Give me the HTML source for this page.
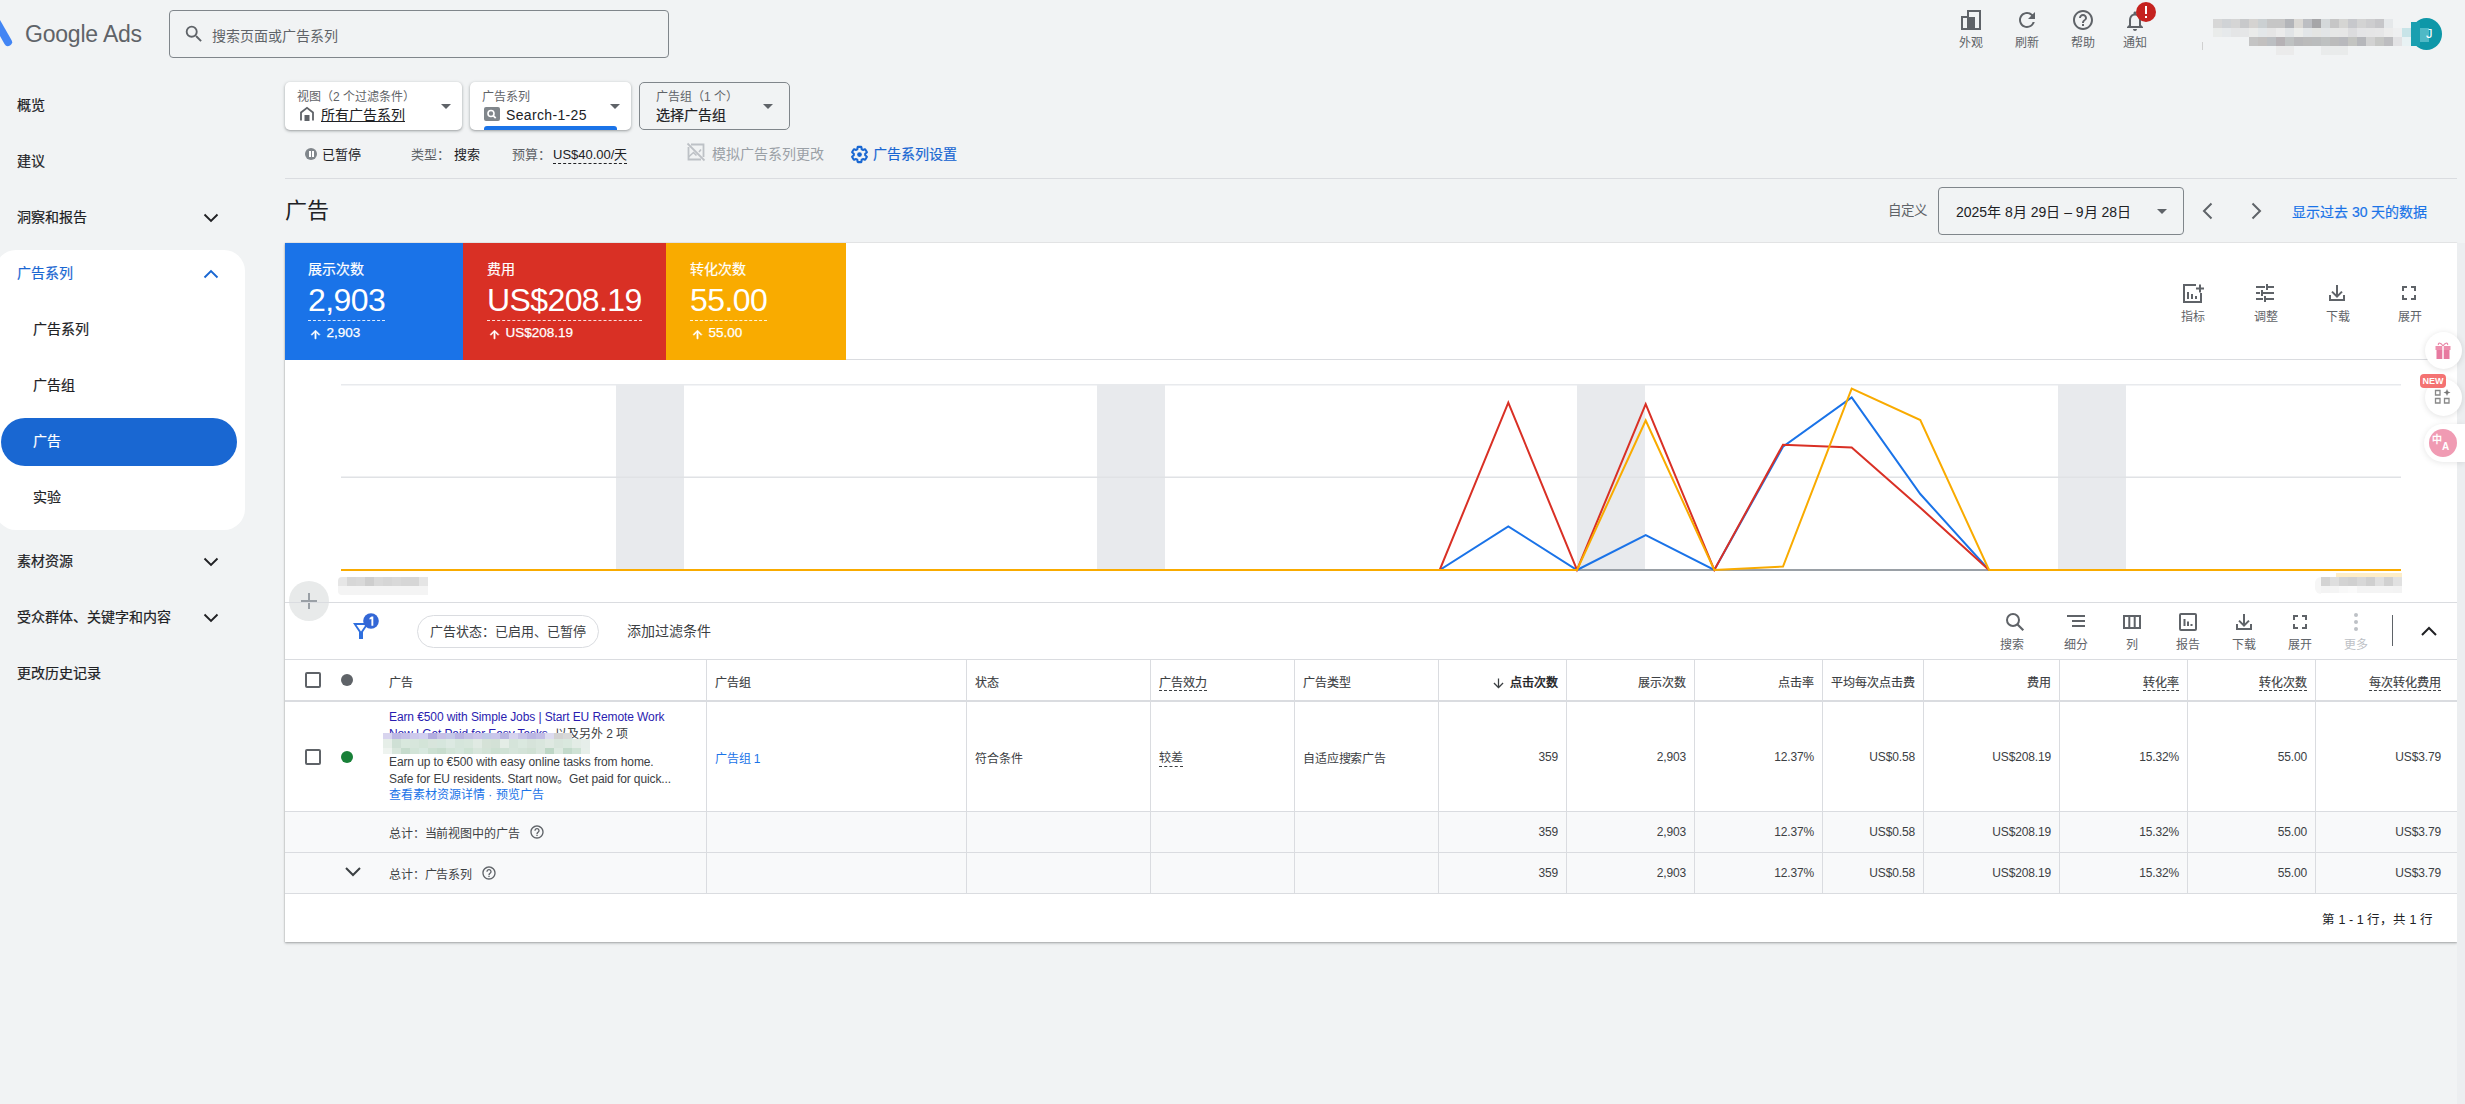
<!DOCTYPE html>
<html lang="zh-CN"><head><meta charset="utf-8">
<style>
*{box-sizing:border-box;margin:0;padding:0}
html,body{width:2465px;height:1104px;overflow:hidden}
body{background:#f1f3f4;font-family:"Liberation Sans",sans-serif;color:#202124;position:relative}
.a{position:absolute;white-space:nowrap}
.g{color:#5f6368}
.blue{color:#1a73e8}
svg{display:block}
/* sidebar */
.nav{position:absolute;left:17px;font-size:14px;font-weight:400;-webkit-text-stroke:0.2px currentColor;color:#202124;line-height:16px}
.chev{position:absolute;left:203px;width:16px;height:16px}
/* chips */
.chip{position:absolute;top:82px;height:48px;border-radius:5px;background:#fff;box-shadow:0 1px 2px rgba(60,64,67,.3),0 1px 3px 1px rgba(60,64,67,.15)}
.chip .lab{position:absolute;top:8px;font-size:12px;color:#5f6368;line-height:14px}
.chip .val{position:absolute;top:24px;font-size:14px;line-height:18px;color:#202124}
.tri{position:absolute;width:0;height:0;border-left:5px solid transparent;border-right:5px solid transparent;border-top:5px solid #5f6368}
/* card */
.card{position:absolute;left:285px;top:243px;width:2172px;height:699px;background:#fff;box-shadow:0 0 1px rgba(60,64,67,.3),0 1px 2px rgba(60,64,67,.35),0 2px 3px rgba(60,64,67,.08)}
.tile{position:absolute;top:244px;color:#fff}
.tl{position:absolute;top:17px;font-size:14px;line-height:16px;-webkit-text-stroke:0.2px currentColor}
.tv{position:absolute;top:38px;font-size:32px;letter-spacing:-0.6px;line-height:37px;border-bottom:1.5px dashed rgba(255,255,255,.85);padding-bottom:1px}
.td{position:absolute;top:81px;font-size:13.5px;line-height:16px;-webkit-text-stroke:0.25px currentColor}
.up{display:inline-block;font-size:13px;margin-right:4px;font-weight:bold}
.tile div{white-space:nowrap}
.ci{position:absolute;top:310px;font-size:12px;line-height:14px;color:#5f6368;width:26px;text-align:center}
.ti{position:absolute;top:638px;font-size:12px;line-height:14px;color:#5f6368;text-align:center;white-space:nowrap}
.th{position:absolute;top:677px;font-size:12px;line-height:13px;color:#3c4043;-webkit-text-stroke:0.15px currentColor;white-space:nowrap}
.arr{font-size:13px;margin-right:4px}
.td2{position:absolute;font-size:12px;line-height:16px;color:#3c4043;white-space:nowrap;letter-spacing:-0.15px}
.tl2{position:absolute;top:36px;font-size:12px;line-height:14px;color:#5f6368;white-space:nowrap}
</style></head>
<body>
<!-- ===== HEADER ===== -->
<svg class="a" style="left:0;top:18px" width="14" height="32" viewBox="0 0 14 32"><path d="M-4 3 L8 24" stroke="#4285f4" stroke-width="8" stroke-linecap="round"/></svg>
<div class="a" style="left:25px;top:20px;font-size:23px;color:#5f6368;line-height:28px;letter-spacing:-0.2px">Google Ads</div>
<div class="a" style="left:169px;top:10px;width:500px;height:48px;border:1px solid #80868b;border-radius:4px"></div>
<svg class="a" style="left:183px;top:23px" width="22" height="22" viewBox="0 0 24 24"><path fill="#5f6368" d="M15.5 14h-.79l-.28-.27A6.47 6.47 0 0 0 16 9.5 6.5 6.5 0 1 0 9.5 16c1.61 0 3.09-.59 4.23-1.57l.27.28v.79l5 4.99L20.49 19l-4.99-5zm-6 0C7.01 14 5 11.99 5 9.5S7.01 5 9.5 5 14 7.01 14 9.5 11.99 14 9.5 14z"/></svg>
<div class="a g" style="left:212px;top:27px;font-size:14px;line-height:18px">搜索页面或广告系列</div>

<!-- top right icons -->

<svg class="a" style="left:1960px;top:9px" width="22" height="22" viewBox="0 0 22 22"><path fill="none" stroke="#5f6368" stroke-width="2" d="M2 20V8h6v12zM8 20V2h12v18z"/><rect x="8" y="8" width="7" height="12" fill="#5f6368"/></svg>
<div class="tl2" style="left:1959px">外观</div>
<svg class="a" style="left:2015px;top:8px" width="24" height="24" viewBox="0 0 24 24"><path fill="#5f6368" d="M17.65 6.35A7.958 7.958 0 0 0 12 4c-4.42 0-7.99 3.58-7.99 8s3.57 8 7.99 8c3.73 0 6.84-2.55 7.73-6h-2.08A5.99 5.99 0 0 1 12 18c-3.31 0-6-2.69-6-6s2.69-6 6-6c1.66 0 3.14.69 4.22 1.78L13 11h7V4l-2.35 2.35z"/></svg>
<div class="tl2" style="left:2015px">刷新</div>
<svg class="a" style="left:2071px;top:8px" width="24" height="24" viewBox="0 0 24 24"><path fill="#5f6368" d="M11 18h2v-2h-2v2zm1-16C6.48 2 2 6.48 2 12s4.48 10 10 10 10-4.48 10-10S17.52 2 12 2zm0 18c-4.41 0-8-3.59-8-8s3.59-8 8-8 8 3.59 8 8-3.59 8-8 8zm0-14c-2.21 0-4 1.79-4 4h2c0-1.1.9-2 2-2s2 .9 2 2c0 2-3 1.75-3 5h2c0-2.25 3-2.5 3-5 0-2.21-1.79-4-4-4z"/></svg>
<div class="tl2" style="left:2071px">帮助</div>
<svg class="a" style="left:2123px;top:9px" width="24" height="24" viewBox="0 0 24 24"><path fill="#5f6368" d="M12 22c1.1 0 2-.9 2-2h-4c0 1.1.89 2 2 2zm6-6v-5c0-3.07-1.64-5.64-4.5-6.32V4c0-.83-.67-1.5-1.5-1.5s-1.5.67-1.5 1.5v.68C7.63 5.36 6 7.92 6 11v5l-2 2v1h16v-1l-2-2zm-2 1H8v-6c0-2.48 1.51-4.5 4-4.5s4 2.02 4 4.5v6z"/></svg>
<div class="a" style="left:2136px;top:2px;width:20px;height:20px;border-radius:50%;background:#c5221f;border:0 solid #f1f3f4"></div>
<div class="a" style="left:2145px;top:6px;width:2.4px;height:8px;background:#fff"></div>
<div class="a" style="left:2145px;top:15.5px;width:2.4px;height:2.4px;background:#fff"></div>
<div class="tl2" style="left:2123px">通知</div>
<div class="a" style="left:2202px;top:42px;width:1px;height:8px;background:#d0d0d0"></div>
<div class="a" style="left:2213px;top:19px;width:180px;height:9px;background:linear-gradient(90deg,#d7d7d7 0px 9px,#d0d3d6 9px 18px,#d5d5d5 18px 27px,#c8c9cb 27px 36px,#d5d3d1 36px 45px,#cbd0d2 45px 54px,#c6c6c6 54px 63px,#c6c6c6 63px 72px,#b3b5b9 72px 81px,#dad8d4 81px 90px,#bcbec2 90px 99px,#a6a6a8 99px 108px,#d4d8da 108px 117px,#c6c6c6 117px 126px,#d5d5d3 126px 135px,#c7c8cc 135px 144px,#d3d3d3 144px 153px,#cdcdcf 153px 162px,#c6c6c9 162px 171px,#e5e8ea 171px 180px)"></div>
<div class="a" style="left:2213px;top:28px;width:198px;height:9px;background:linear-gradient(90deg,#e9ebea 0px 9px,#e6e9eb 9px 18px,#e4e5e6 18px 27px,#e5e6e7 27px 36px,#eaebea 36px 45px,#e3e7e9 45px 54px,#e5e5e5 54px 63px,#ebebeb 63px 72px,#e1e4e6 72px 81px,#ecedeb 81px 90px,#e3e6e8 90px 99px,#e4e5e3 99px 108px,#e2e5e7 108px 117px,#e6e7e6 117px 126px,#e6e6e6 126px 135px,#dcdcde 135px 144px,#e4e4e6 144px 153px,#e5e5e6 153px 162px,#e6e6e7 162px 171px,#ececec 171px 180px,#eeeff0 180px 189px,#c8e4e8 189px 198px)"></div>
<div class="a" style="left:2249px;top:37px;width:162px;height:9px;background:linear-gradient(90deg,#c4c4c4 0px 9px,#c2c0bf 9px 18px,#bcbfc2 18px 27px,#b6b2b5 27px 36px,#bfc2c2 36px 45px,#b8b8ba 45px 54px,#bbbbbb 54px 63px,#babcbd 63px 72px,#bec1c1 72px 81px,#bbbbbb 81px 90px,#b8b9bd 90px 99px,#c3c4c1 99px 108px,#b6b7bb 108px 117px,#d2d2d2 117px 126px,#c6c7c5 126px 135px,#bdbdc0 135px 144px,#e2e2e4 144px 153px,#e8f2f4 153px 162px)"></div>
<div class="a" style="left:2276px;top:46px;width:18px;height:9px;background:#ebebeb"></div><div class="a" style="left:2321px;top:46px;width:27px;height:9px;background:#e9ebeb"></div>
<div class="a" style="left:2411px;top:18px;width:31px;height:32px;border-radius:50%;background:#0e97a8"></div>
<div class="a" style="left:2411px;top:22px;width:9px;height:24px;background:#1a9fb0"></div><div class="a" style="left:2420px;top:28px;width:9px;height:14px;background:#4fb9c6"></div>
<div class="a" style="left:2426px;top:26px;font-size:13px;line-height:16px;color:#fff">J</div>


<!-- ===== SIDEBAR ===== -->
<div class="nav" style="top:97px">概览</div>
<div class="nav" style="top:153px">建议</div>
<div class="nav" style="top:209px">洞察和报告</div>
<div class="a" style="left:-5px;top:250px;width:250px;height:280px;background:#fff;border-radius:21px"></div>
<div class="nav" style="top:265px;color:#1a67d2">广告系列</div>
<div class="nav" style="top:321px;left:33px">广告系列</div>
<div class="nav" style="top:377px;left:33px">广告组</div>
<div class="a" style="left:1px;top:418px;width:236px;height:48px;background:#1967d2;border-radius:24px"></div>
<div class="nav" style="top:433px;left:33px;color:#fff">广告</div>
<div class="nav" style="top:489px;left:33px">实验</div>
<div class="nav" style="top:553px">素材资源</div>
<div class="nav" style="top:609px">受众群体、关键字和内容</div>
<div class="nav" style="top:665px">更改历史记录</div>

<!-- ===== CHIPS ===== -->
<div class="chip" style="left:285px;width:177px">
  <div class="lab" style="left:12px">视图（2 个过滤条件）</div>
  <div class="val" style="left:36px;text-decoration:underline">所有广告系列</div>
  <div class="tri" style="left:156px;top:22px"></div>
</div>
<div class="chip" style="left:470px;width:161px">
  <div class="lab" style="left:12px">广告系列</div>
  <div class="val" style="left:36px;letter-spacing:0.35px">Search-1-25</div>
  <div class="a" style="left:14px;top:44px;width:133px;height:4px;background:#1a73e8;border-radius:3px 3px 0 0"></div>
  <div class="tri" style="left:140px;top:22px"></div>
</div>
<div class="a" style="left:639px;top:82px;width:151px;height:48px;border:1px solid #80868b;border-radius:5px">
  <div class="a" style="left:16px;top:7px;font-size:12px;color:#5f6368;line-height:14px">广告组（1 个）</div>
  <div class="a" style="left:16px;top:23px;font-size:14px;line-height:18px;-webkit-text-stroke:0.2px currentColor">选择广告组</div>
  <div class="tri" style="left:123px;top:21px"></div>
</div>

<!-- status line -->
<div class="a" style="left:305px;top:148px;width:12px;height:12px;border-radius:50%;background:#80868b"></div>
<div class="a" style="left:322px;top:147px;font-size:13px;line-height:16px">已暂停</div>
<div class="a g" style="left:411px;top:147px;font-size:13px;line-height:16px">类型：</div>
<div class="a" style="left:454px;top:147px;font-size:13px;line-height:16px">搜索</div>
<div class="a g" style="left:512px;top:147px;font-size:13px;line-height:16px">预算：</div>
<div class="a" style="left:553px;top:147px;font-size:13px;line-height:16px;border-bottom:1px dashed #202124">US$40.00/天</div>
<div class="a" style="left:712px;top:146px;font-size:14px;line-height:16px;color:#9aa0a6">模拟广告系列更改</div>
<div class="a" style="left:873px;top:146px;font-size:14px;line-height:16px;color:#1967d2;-webkit-text-stroke:0.2px currentColor">广告系列设置</div>
<div class="a" style="left:285px;top:178px;width:2172px;height:1px;background:#dadce0"></div>


<!-- chips icons -->
<svg class="a" style="left:299px;top:106px" width="16" height="16" viewBox="0 0 16 16"><path fill="none" stroke="#5f6368" stroke-width="1.8" d="M2 14.5V6.5L8 1.8l6 4.7v8"/><rect x="5.5" y="9" width="5" height="6" fill="#5f6368"/></svg>
<svg class="a" style="left:484px;top:107px" width="16" height="14" viewBox="0 0 16 14"><rect x="0" y="0" width="16" height="14" rx="2" fill="#80868b"/><circle cx="7" cy="6.5" r="3" fill="none" stroke="#fff" stroke-width="1.6"/><path d="M9.2 8.7l2.5 2.5" stroke="#fff" stroke-width="1.8"/></svg>
<div class="a" style="left:309px;top:151px;width:1.6px;height:6px;background:#fff"></div>
<div class="a" style="left:312.4px;top:151px;width:1.6px;height:6px;background:#fff"></div>
<svg class="a" style="left:686px;top:142px" width="20" height="20" viewBox="0 0 20 20"><path fill="none" stroke="#bdc1c6" stroke-width="1.8" d="M5 2.5h12.5V15M15 17.5H2.5V5"/><path d="M1.5 1.5l17 17" stroke="#bdc1c6" stroke-width="1.8"/><path d="M2.5 15l5-4.5 3 3M13 10l2-2.5" fill="none" stroke="#bdc1c6" stroke-width="1.6"/></svg>
<svg class="a" style="left:850px;top:145px" width="19" height="19" viewBox="0 0 24 24"><path fill="none" stroke="#1967d2" stroke-width="2.6" stroke-linejoin="round" d="M19.14 12.94c.04-.3.06-.61.06-.94 0-.32-.02-.64-.07-.94l2.03-1.58a.49.49 0 0 0 .12-.61l-1.92-3.32a.488.488 0 0 0-.59-.22l-2.39.96c-.5-.38-1.03-.7-1.62-.94l-.36-2.54a.484.484 0 0 0-.48-.41h-3.84c-.24 0-.43.17-.47.41l-.36 2.54c-.59.24-1.13.57-1.62.94l-2.39-.96c-.22-.08-.47 0-.59.22L2.74 8.87c-.12.21-.08.47.12.61l2.03 1.58c-.05.3-.09.63-.09.94s.02.64.07.94l-2.03 1.58a.49.49 0 0 0-.12.61l1.92 3.32c.12.22.37.29.59.22l2.39-.96c.5.38 1.03.7 1.62.94l.36 2.54c.05.24.24.41.48.41h3.84c.24 0 .44-.17.47-.41l.36-2.54c.59-.24 1.13-.56 1.62-.94l2.39.96c.22.08.47 0 .59-.22l1.92-3.32c.12-.22.07-.47-.12-.61l-2.01-1.58z"/><circle cx="12" cy="12" r="3" fill="#1967d2"/></svg>
<!-- date arrows -->
<svg class="a" style="left:2200px;top:201px" width="16" height="20" viewBox="0 0 16 20"><path fill="none" stroke="#5f6368" stroke-width="2" d="M11.5 2.5L4 10l7.5 7.5"/></svg>
<svg class="a" style="left:2248px;top:201px" width="16" height="20" viewBox="0 0 16 20"><path fill="none" stroke="#5f6368" stroke-width="2" d="M4.5 2.5L12 10l-7.5 7.5"/></svg>
<!-- sidebar chevrons -->
<svg class="a" style="left:202px;top:211px" width="18" height="14" viewBox="0 0 18 14"><path fill="none" stroke="#202124" stroke-width="1.9" d="M2.5 3.5l6.5 6.5 6.5-6.5"/></svg>
<svg class="a" style="left:202px;top:267px" width="18" height="14" viewBox="0 0 18 14"><path fill="none" stroke="#1967d2" stroke-width="1.9" d="M2.5 10.5L9 4l6.5 6.5"/></svg>
<svg class="a" style="left:202px;top:555px" width="18" height="14" viewBox="0 0 18 14"><path fill="none" stroke="#202124" stroke-width="1.9" d="M2.5 3.5l6.5 6.5 6.5-6.5"/></svg>
<svg class="a" style="left:202px;top:611px" width="18" height="14" viewBox="0 0 18 14"><path fill="none" stroke="#202124" stroke-width="1.9" d="M2.5 3.5l6.5 6.5 6.5-6.5"/></svg>

<!-- heading -->
<div class="a" style="left:285px;top:198px;font-size:22px;line-height:26px">广告</div>
<div class="a g" style="left:1888px;top:203px;font-size:13.5px;line-height:16px">自定义</div>
<div class="a" style="left:1938px;top:187px;width:246px;height:48px;border:1px solid #80868b;border-radius:4px"></div>
<div class="a" style="left:1956px;top:203px;font-size:14px;line-height:18px">2025年 8月 29日 – 9月 28日</div>
<div class="tri" style="left:2157px;top:209px"></div>
<div class="a" style="left:2292px;top:203px;font-size:14px;line-height:18px;color:#1a73e8;-webkit-text-stroke:0.2px currentColor">显示过去 30 天的数据</div>

<!-- ===== CARD ===== -->
<div class="card"></div>

<!-- tiles -->
<div class="a" style="left:285px;top:243px;width:178px;height:117px;background:#1a73e8"></div>
<div class="a" style="left:463px;top:243px;width:203px;height:117px;background:#d93025"></div>
<div class="a" style="left:666px;top:243px;width:180px;height:117px;background:#f9ab00"></div>
<div class="tile" style="left:308px"><div class="tl">展示次数</div><div class="tv">2,903</div><div class="td"><svg style="display:inline-block;vertical-align:top;margin:3px 5px 0 0.5px" width="13" height="13" viewBox="0 0 24 24"><path fill="#fff" stroke="#fff" stroke-width="1.3" d="M4 12l1.41 1.41L11 7.83V20h2V7.83l5.58 5.59L20 12l-8-8-8 8z"/></svg>2,903</div></div>
<div class="tile" style="left:487px"><div class="tl">费用</div><div class="tv">US$208.19</div><div class="td"><svg style="display:inline-block;vertical-align:top;margin:3px 5px 0 0.5px" width="13" height="13" viewBox="0 0 24 24"><path fill="#fff" stroke="#fff" stroke-width="1.3" d="M4 12l1.41 1.41L11 7.83V20h2V7.83l5.58 5.59L20 12l-8-8-8 8z"/></svg>US$208.19</div></div>
<div class="tile" style="left:690px"><div class="tl">转化次数</div><div class="tv">55.00</div><div class="td"><svg style="display:inline-block;vertical-align:top;margin:3px 5px 0 0.5px" width="13" height="13" viewBox="0 0 24 24"><path fill="#fff" stroke="#fff" stroke-width="1.3" d="M4 12l1.41 1.41L11 7.83V20h2V7.83l5.58 5.59L20 12l-8-8-8 8z"/></svg>55.00</div></div>
<div class="a" style="left:846px;top:359px;width:1611px;height:1px;background:#dadce0"></div>


<!-- chart icons -->
<svg class="a" style="left:2183px;top:284px" width="22" height="19" viewBox="0 0 22 19"><path fill="none" stroke="#5f6368" stroke-width="2" d="M13 1H1v17h17V9"/><path fill="#5f6368" d="M4 8h2v7H4zM8 10h2v5H8zM12 12h2v3h-2zM16 0.5h2v8h-2zM13 3.5h8v2h-8z"/></svg>
<div class="ci" style="left:2180px">指标</div>
<svg class="a" style="left:2255px;top:284px" width="20" height="18" viewBox="0 0 20 18"><path fill="#5f6368" d="M1 2h9v2H1zM13 2h6v2h-6zM11 0h2v6h-2zM1 8h4v2H1zM8 8h11v2H8zM6 6h2v6H6zM1 14h7v2H1zM11 14h8v2h-8zM9 12h2v6H9z"/></svg>
<div class="ci" style="left:2253px">调整</div>
<svg class="a" style="left:2328px;top:284px" width="18" height="18" viewBox="0 0 18 18"><path fill="#5f6368" d="M8 1h2v9.2l3.3-3.3 1.4 1.4L9 14 3.3 8.3l1.4-1.4L8 10.2zM1 11h2v4h12v-4h2v6H1z"/></svg>
<div class="ci" style="left:2325px">下载</div>
<svg class="a" style="left:2401px;top:285px" width="16" height="16" viewBox="0 0 16 16"><path fill="#5f6368" d="M1 1h5v2H3v3H1zM10 1h5v5h-2V3h-3zM1 10h2v3h3v2H1zM13 10h2v5h-5v-2h3z"/></svg>
<div class="ci" style="left:2397px">展开</div>

<svg class="a" style="left:0;top:0" width="2465" height="610" viewBox="0 0 2465 610">
<rect x="616" y="385" width="68" height="185" fill="#e8eaed"/>
<rect x="1097" y="385" width="68" height="185" fill="#e8eaed"/>
<rect x="1577" y="385" width="68" height="185" fill="#e8eaed"/>
<rect x="2058" y="385" width="68" height="185" fill="#e8eaed"/>
<rect x="341" y="384" width="2060" height="1.5" fill="#e8eaed"/>
<rect x="341" y="476.5" width="2060" height="1.5" fill="#e0e2e5"/>
<rect x="341" y="569" width="2060" height="2" fill="#9aa0a6"/>
<polyline fill="none" stroke="#1a73e8" stroke-width="2" stroke-linejoin="miter" points="341.0,570 409.7,570 478.3,570 547.0,570 615.7,570 684.3,570 753.0,570 821.7,570 890.3,570 959.0,570 1027.7,570 1096.3,570 1165.0,570 1233.7,570 1302.3,570 1371.0,570 1439.7,570 1508.3,526.4 1577.0,570 1645.7,535 1714.3,570 1783.0,446.7 1851.7,397.5 1920.3,494 1989.0,570 2057.7,570 2126.3,570 2195.0,570 2263.7,570 2332.3,570 2401.0,570"/>
<polyline fill="none" stroke="#d93025" stroke-width="2" stroke-linejoin="miter" points="341.0,570 409.7,570 478.3,570 547.0,570 615.7,570 684.3,570 753.0,570 821.7,570 890.3,570 959.0,570 1027.7,570 1096.3,570 1165.0,570 1233.7,570 1302.3,570 1371.0,570 1439.7,570 1508.3,402.6 1577.0,570 1645.7,404 1714.3,570 1783.0,444.7 1851.7,447.5 1920.3,507.7 1989.0,570 2057.7,570 2126.3,570 2195.0,570 2263.7,570 2332.3,570 2401.0,570"/>
<polyline fill="none" stroke="#f9ab00" stroke-width="2" stroke-linejoin="miter" points="341.0,570 409.7,570 478.3,570 547.0,570 615.7,570 684.3,570 753.0,570 821.7,570 890.3,570 959.0,570 1027.7,570 1096.3,570 1165.0,570 1233.7,570 1302.3,570 1371.0,570 1439.7,570 1508.3,570 1577.0,570 1645.7,420.5 1714.3,570 1783.0,566.5 1851.7,388.7 1920.3,420 1989.0,570 2057.7,570 2126.3,570 2195.0,570 2263.7,570 2332.3,570 2401.0,570"/>
</svg>
<!-- x labels pixelated -->
<div class="a" style="left:338px;top:577px;width:90px;height:9px;background:linear-gradient(90deg,#e6e6e6 0 9px,#d7d7d7 9px 18px,#d9d9d9 18px 27px,#cecece 27px 36px,#d9d9d9 36px 45px,#d6d6d6 45px 54px,#d9d9d9 54px 63px,#d6d6d6 63px 81px,#e5e5e5 81px);border-radius:4px 0 0 0"></div>
<div class="a" style="left:338px;top:586px;width:90px;height:9px;background:#f4f4f4;border-radius:0 0 0 4px"></div>
<div class="a" style="left:2336px;top:573px;width:66px;height:4px;background:#fdedc8"></div><div class="a" style="left:2315px;top:577px;width:6px;height:17px;background:#f6f6f6;border-radius:6px 0 0 6px"></div><div class="a" style="left:2321px;top:577px;width:81px;height:9px;background:linear-gradient(90deg,#d3d3d3 0px 9px,#dedede 9px 18px,#d3d3d3 18px 27px,#d0d0d0 27px 36px,#d7d7d7 36px 45px,#cfcfcf 45px 54px,#dfdfdf 54px 63px,#d1d1d1 63px 72px,#e1e1e1 72px 81px)"></div><div class="a" style="left:2321px;top:586px;width:81px;height:7px;background:linear-gradient(90deg,#f3f3f3 0px 9px,#f4f4f4 9px 18px,#f8f8f8 18px 27px,#fafafa 27px 36px,#f4f4f4 36px 45px,#f4f4f4 45px 54px,#f4f4f4 54px 63px,#f4f4f4 63px 72px,#f3f3f3 72px 81px)"></div>

<div class="a" style="left:289px;top:581px;width:40px;height:40px;border-radius:50%;background:#e8eaea"></div>
<div class="a" style="left:308px;top:593px;width:2px;height:16px;background:#9aa0a6"></div>
<div class="a" style="left:301px;top:600px;width:16px;height:2px;background:#9aa0a6"></div>
<div class="a" style="left:285px;top:602px;width:2172px;height:1px;background:#dadce0"></div>


<!-- table toolbar -->
<svg class="a" style="left:350px;top:610px" width="32" height="32" viewBox="0 0 32 32"><path fill="#2f6fde" fill-rule="evenodd" d="M3 13h16l-6 9v7h-4v-7zM6.5 15h9L11 21.5z"/><circle cx="21" cy="11" r="7.8" fill="#3367d6"/><path fill="#fff" d="M21.6 6.5h1.7v9.2h-1.9V8.9l-1.9.6V8z"/></svg>
<div class="a" style="left:417px;top:615px;width:182px;height:33px;border:1px solid #dadce0;border-radius:17px"></div>
<div class="a" style="left:430px;top:624px;font-size:13px;line-height:16px;color:#3c4043">广告状态：已启用、已暂停</div>
<div class="a" style="left:627px;top:623px;font-size:14px;line-height:16px;color:#3c4043">添加过滤条件</div>

<svg class="a" style="left:2005px;top:612px" width="20" height="20" viewBox="0 0 20 20"><circle cx="8" cy="8" r="6" fill="none" stroke="#5f6368" stroke-width="2"/><path d="M12.3 12.3l6 6" stroke="#5f6368" stroke-width="2.2"/></svg>
<div class="ti" style="left:2000px">搜索</div>
<svg class="a" style="left:2066px;top:614px" width="20" height="16" viewBox="0 0 20 16"><path fill="#5f6368" d="M1 1h18v2H1zM6 6h13v2H6zM6 11h13v2H6z"/></svg>
<div class="ti" style="left:2064px">细分</div>
<svg class="a" style="left:2122px;top:614px" width="20" height="16" viewBox="0 0 20 16"><path fill="none" stroke="#5f6368" stroke-width="2" d="M2 2h16v12H2zM7.3 2v12M12.7 2v12"/></svg>
<div class="ti" style="left:2126px">列</div>
<svg class="a" style="left:2178px;top:612px" width="20" height="20" viewBox="0 0 20 20"><rect x="2" y="2" width="16" height="16" rx="1" fill="none" stroke="#5f6368" stroke-width="2"/><path fill="#5f6368" d="M5.5 7h2v7h-2zM9 9.5h2V14H9zM12.5 12h2v2h-2z"/></svg>
<div class="ti" style="left:2176px">报告</div>
<svg class="a" style="left:2235px;top:613px" width="18" height="18" viewBox="0 0 18 18"><path fill="#5f6368" d="M8 1h2v9.2l3.3-3.3 1.4 1.4L9 14 3.3 8.3l1.4-1.4L8 10.2zM1 11h2v4h12v-4h2v6H1z"/></svg>
<div class="ti" style="left:2232px">下载</div>
<svg class="a" style="left:2292px;top:614px" width="16" height="16" viewBox="0 0 16 16"><path fill="#5f6368" d="M1 1h5v2H3v3H1zM10 1h5v5h-2V3h-3zM1 10h2v3h3v2H1zM13 10h2v5h-5v-2h3z"/></svg>
<div class="ti" style="left:2288px">展开</div>
<svg class="a" style="left:2350px;top:612px" width="12" height="20" viewBox="0 0 12 20"><circle cx="6" cy="3" r="2" fill="#bdc1c6"/><circle cx="6" cy="10" r="2" fill="#bdc1c6"/><circle cx="6" cy="17" r="2" fill="#bdc1c6"/></svg>
<div class="ti" style="left:2344px;color:#bdc1c6">更多</div>
<div class="a" style="left:2392px;top:615px;width:1px;height:31px;background:#5f6368"></div>
<svg class="a" style="left:2419px;top:624px" width="20" height="14" viewBox="0 0 20 14"><path fill="none" stroke="#202124" stroke-width="2" d="M3 11l7-7 7 7"/></svg>

<div class="a" style="left:285px;top:812px;width:2172px;height:81px;background:#f8f9fa"></div>
<div class="a" style="left:285px;top:659px;width:2172px;height:1px;background:#dadce0"></div>
<div class="a" style="left:285px;top:700px;width:2172px;height:2px;background:#dadce0"></div>
<div class="a" style="left:285px;top:811px;width:2172px;height:1px;background:#dadce0"></div>
<div class="a" style="left:285px;top:852px;width:2172px;height:1px;background:#dadce0"></div>
<div class="a" style="left:285px;top:893px;width:2172px;height:1px;background:#dadce0"></div>
<div class="a" style="left:706px;top:660px;width:1px;height:233px;background:#dadce0"></div>
<div class="a" style="left:966px;top:660px;width:1px;height:233px;background:#dadce0"></div>
<div class="a" style="left:1150px;top:660px;width:1px;height:233px;background:#dadce0"></div>
<div class="a" style="left:1294px;top:660px;width:1px;height:233px;background:#dadce0"></div>
<div class="a" style="left:1438px;top:660px;width:1px;height:233px;background:#dadce0"></div>
<div class="a" style="left:1566px;top:660px;width:1px;height:233px;background:#dadce0"></div>
<div class="a" style="left:1694px;top:660px;width:1px;height:233px;background:#dadce0"></div>
<div class="a" style="left:1822px;top:660px;width:1px;height:233px;background:#dadce0"></div>
<div class="a" style="left:1923px;top:660px;width:1px;height:233px;background:#dadce0"></div>
<div class="a" style="left:2059px;top:660px;width:1px;height:233px;background:#dadce0"></div>
<div class="a" style="left:2187px;top:660px;width:1px;height:233px;background:#dadce0"></div>
<div class="a" style="left:2315px;top:660px;width:1px;height:233px;background:#dadce0"></div>
<div class="a" style="left:305px;top:672px;width:16px;height:16px;border:2px solid #5f6368;border-radius:2px"></div>
<div class="a" style="left:341px;top:674px;width:12px;height:12px;border-radius:50%;background:#5f6368"></div>
<div class="th" style="left:389px;">广告</div>
<div class="th" style="left:715px;">广告组</div>
<div class="th" style="left:975px;">状态</div>
<div class="th" style="left:1159px;border-bottom:1px dashed #3c4043;">广告效力</div>
<div class="th" style="left:1303px;">广告类型</div>
<div class="th thr" style="right:907px;color:#202124;"><svg style="display:inline-block;vertical-align:top;margin:-1px 4px 0 0" width="15" height="15" viewBox="0 0 24 24"><path fill="#3c4043" d="M20 12l-1.41-1.41L13 16.17V4h-2v12.17l-5.58-5.59L4 12l8 8 8-8z"/></svg><b style="font-weight:400;-webkit-text-stroke:0.45px currentColor;color:#202124">点击次数</b></div>
<div class="th thr" style="right:779px;">展示次数</div>
<div class="th thr" style="right:651px;">点击率</div>
<div class="th thr" style="right:550px;">平均每次点击费</div>
<div class="th thr" style="right:414px;">费用</div>
<div class="th thr" style="right:286px;border-bottom:1px dashed #3c4043;">转化率</div>
<div class="th thr" style="right:158px;border-bottom:1px dashed #3c4043;">转化次数</div>
<div class="th thr" style="right:24px;border-bottom:1px dashed #3c4043;">每次转化费用</div>
<div class="a" style="left:305px;top:749px;width:16px;height:16px;border:2px solid #5f6368;border-radius:2px"></div>
<div class="a" style="left:341px;top:751px;width:12px;height:12px;border-radius:50%;background:#188038"></div>
<div class="a" style="left:389px;top:709px;font-size:12px;letter-spacing:-0.1px;line-height:16px;color:#2a1cb0">Earn €500 with Simple Jobs | Start EU Remote Work</div>
<div class="a" style="left:389px;top:726px;height:9px;overflow:hidden;font-size:12px;letter-spacing:-0.1px;line-height:16px;color:#2a1cb0">Now | Get Paid for Easy Tasks</div>
<div class="a" style="left:555px;top:726px;font-size:12px;line-height:16px;color:#3c4043">以及另外 2 项</div>
<div class="a" style="left:383px;top:733px;width:189px;height:6px;background:linear-gradient(90deg,#d8d4ee 0px 9px,#bdb8e4 9px 18px,#c4bfe8 18px 27px,#cdc9ec 27px 36px,#d2cff0 36px 45px,#b2acdf 45px 54px,#c6c0e6 54px 63px,#c4c6e8 63px 72px,#b9b3e2 72px 81px,#c3bfe6 81px 90px,#cbc4ea 90px 99px,#c0c8e8 99px 108px,#c9c6ea 108px 117px,#b9b5e2 117px 126px,#d6d3ee 126px 135px,#c6c2e8 135px 144px,#bbb6e3 144px 153px,#c2bde6 153px 162px,#dcdbef 162px 171px,#d2d2d2 171px 180px,#d8d8d8 180px 189px)"></div>
<div class="a" style="left:383px;top:739px;width:207px;height:9px;background:linear-gradient(90deg,#e6eee8 0px 9px,#cfe0d5 9px 18px,#d8e8dd 18px 27px,#d7e6dc 27px 36px,#d3e4d8 36px 45px,#d8e5dc 45px 54px,#d6e6dd 54px 63px,#dce9e2 63px 72px,#d5e5db 72px 81px,#d7e6dc 81px 90px,#e0eae3 90px 99px,#d5e2d7 99px 108px,#d3e1d6 108px 117px,#e4ede6 117px 126px,#d5e4da 126px 135px,#dae8df 135px 144px,#d6e3da 144px 153px,#d9e6dd 153px 162px,#dfe9e2 162px 171px,#d8e5dc 171px 180px,#d9e8de 180px 189px,#e3ece6 189px 198px,#e6eeea 198px 207px)"></div>
<div class="a" style="left:383px;top:748px;width:207px;height:6px;background:linear-gradient(90deg,#eef3ef 0px 9px,#d8e6dc 9px 18px,#c6dccd 18px 27px,#d2e4d8 27px 36px,#d7e8df 36px 45px,#cce0d2 45px 54px,#c8ddce 54px 63px,#d2e4d8 63px 72px,#d5e6dc 72px 81px,#cee2d4 81px 90px,#d8e6dc 90px 99px,#d3e3d7 99px 108px,#cde0d2 108px 117px,#d0e2d5 117px 126px,#d6e5db 126px 135px,#d3e3d8 135px 144px,#d0e1d4 144px 153px,#d9e6dd 153px 162px,#bed7c6 162px 171px,#dce9e0 171px 180px,#c3dacb 180px 189px,#cfe2d5 189px 198px,#e6efea 198px 207px)"></div>
<div class="a" style="left:389px;top:754px;font-size:12px;letter-spacing:-0.1px;line-height:16px;color:#3c4043">Earn up to €500 with easy online tasks from home.</div>
<div class="a" style="left:389px;top:771px;font-size:12px;letter-spacing:-0.1px;line-height:16px;color:#3c4043">Safe for EU residents. Start now。Get paid for quick...</div>
<div class="a" style="left:389px;top:787px;font-size:12px;line-height:16px;color:#1a73e8">查看素材资源详情 · 预览广告</div>
<div class="td2" style="left:715px;top:751px;color:#1a73e8">广告组 1</div>
<div class="td2" style="left:975px;top:751px">符合条件</div>
<div class="td2" style="left:1159px;top:751px;border-bottom:1px dashed #3c4043;line-height:15px">较差</div>
<div class="td2" style="left:1303px;top:751px">自适应搜索广告</div>
<div class="td2" style="right:907px;top:749px">359</div>
<div class="td2" style="right:779px;top:749px">2,903</div>
<div class="td2" style="right:651px;top:749px">12.37%</div>
<div class="td2" style="right:550px;top:749px">US$0.58</div>
<div class="td2" style="right:414px;top:749px">US$208.19</div>
<div class="td2" style="right:286px;top:749px">15.32%</div>
<div class="td2" style="right:158px;top:749px">55.00</div>
<div class="td2" style="right:24px;top:749px">US$3.79</div>
<div class="td2" style="right:907px;top:824px">359</div>
<div class="td2" style="right:779px;top:824px">2,903</div>
<div class="td2" style="right:651px;top:824px">12.37%</div>
<div class="td2" style="right:550px;top:824px">US$0.58</div>
<div class="td2" style="right:414px;top:824px">US$208.19</div>
<div class="td2" style="right:286px;top:824px">15.32%</div>
<div class="td2" style="right:158px;top:824px">55.00</div>
<div class="td2" style="right:24px;top:824px">US$3.79</div>
<div class="td2" style="right:907px;top:865px">359</div>
<div class="td2" style="right:779px;top:865px">2,903</div>
<div class="td2" style="right:651px;top:865px">12.37%</div>
<div class="td2" style="right:550px;top:865px">US$0.58</div>
<div class="td2" style="right:414px;top:865px">US$208.19</div>
<div class="td2" style="right:286px;top:865px">15.32%</div>
<div class="td2" style="right:158px;top:865px">55.00</div>
<div class="td2" style="right:24px;top:865px">US$3.79</div>
<div class="td2" style="left:389px;top:826px">总计：当前视图中的广告</div>
<svg class="a" style="left:529px;top:824px" width="16" height="16" viewBox="0 0 24 24"><path fill="#5f6368" d="M11 18h2v-2h-2v2zm1-16C6.48 2 2 6.48 2 12s4.48 10 10 10 10-4.48 10-10S17.52 2 12 2zm0 18c-4.41 0-8-3.59-8-8s3.59-8 8-8 8 3.59 8 8-3.59 8-8 8zm0-14c-2.21 0-4 1.79-4 4h2c0-1.1.9-2 2-2s2 .9 2 2c0 2-3 1.75-3 5h2c0-2.25 3-2.5 3-5 0-2.21-1.79-4-4-4z"/></svg>
<div class="td2" style="left:389px;top:867px">总计：广告系列</div>
<svg class="a" style="left:481px;top:865px" width="16" height="16" viewBox="0 0 24 24"><path fill="#5f6368" d="M11 18h2v-2h-2v2zm1-16C6.48 2 2 6.48 2 12s4.48 10 10 10 10-4.48 10-10S17.52 2 12 2zm0 18c-4.41 0-8-3.59-8-8s3.59-8 8-8 8 3.59 8 8-3.59 8-8 8zm0-14c-2.21 0-4 1.79-4 4h2c0-1.1.9-2 2-2s2 .9 2 2c0 2-3 1.75-3 5h2c0-2.25 3-2.5 3-5 0-2.21-1.79-4-4-4z"/></svg>
<svg class="a" style="left:344px;top:865px" width="18" height="14" viewBox="0 0 18 14"><path fill="none" stroke="#3c4043" stroke-width="2" d="M2 3l7 7 7-7"/></svg>
<div class="td2" style="right:32px;top:912px;color:#202124;font-size:12.5px;letter-spacing:0">第 1 - 1 行，共 1 行</div>

<!-- floating right -->
<div class="a" style="left:2457px;top:243px;width:8px;height:861px;background:#eceef0"></div>

<div class="a" style="left:2425px;top:332px;width:37px;height:37px;border-radius:50%;background:#fff;box-shadow:0 1px 6px rgba(0,0,0,.12)"></div>
<svg class="a" style="left:2434px;top:341px" width="18" height="20" viewBox="0 0 18 20"><path fill="none" stroke="#e98aa9" stroke-width="1.2" d="M9 5C7 1 3.5 1.5 4.5 4M9 5c2-4 5.5-3.5 4.5-1"/><rect x="1.5" y="5" width="15" height="4" fill="#ee8fae"/><rect x="2.5" y="9" width="13" height="9" fill="#e77aa0"/><rect x="8.3" y="5" width="1.4" height="13" fill="#fff"/></svg>
<div class="a" style="left:2425px;top:379px;width:37px;height:37px;border-radius:50%;background:#fff;box-shadow:0 1px 6px rgba(0,0,0,.12)"></div>
<div class="a" style="left:2420px;top:374px;width:26px;height:14px;border-radius:4px;background:#f47272;color:#fff;font-size:9px;font-weight:bold;line-height:14px;text-align:center">NEW</div>
<svg class="a" style="left:2434px;top:388px" width="18" height="18" viewBox="0 0 18 18"><path fill="none" stroke="#888" stroke-width="1.3" d="M1.5 2.5h4.5v4.5H1.5zM1.5 10.5h4.5V15H1.5zM10.5 10.5H15V15h-4.5z"/><path fill="#777" d="M13 1l1 2.5L16.5 4.5 14 5.5 13 8 12 5.5 9.5 4.5 12 3.5z"/></svg>
<div class="a" style="left:2424px;top:424px;width:41px;height:38px;border-radius:19px 0 0 19px;background:#fff;box-shadow:0 1px 6px rgba(0,0,0,.10)"></div>
<div class="a" style="left:2429px;top:429px;width:28px;height:28px;border-radius:50%;background:#f09bb3"></div>
<div class="a" style="left:2432px;top:434px;font-size:10px;line-height:12px;color:#fff;font-weight:bold">中</div>
<div class="a" style="left:2442px;top:441px;font-size:10px;line-height:12px;color:#fff;font-weight:bold">A</div>


</body></html>
